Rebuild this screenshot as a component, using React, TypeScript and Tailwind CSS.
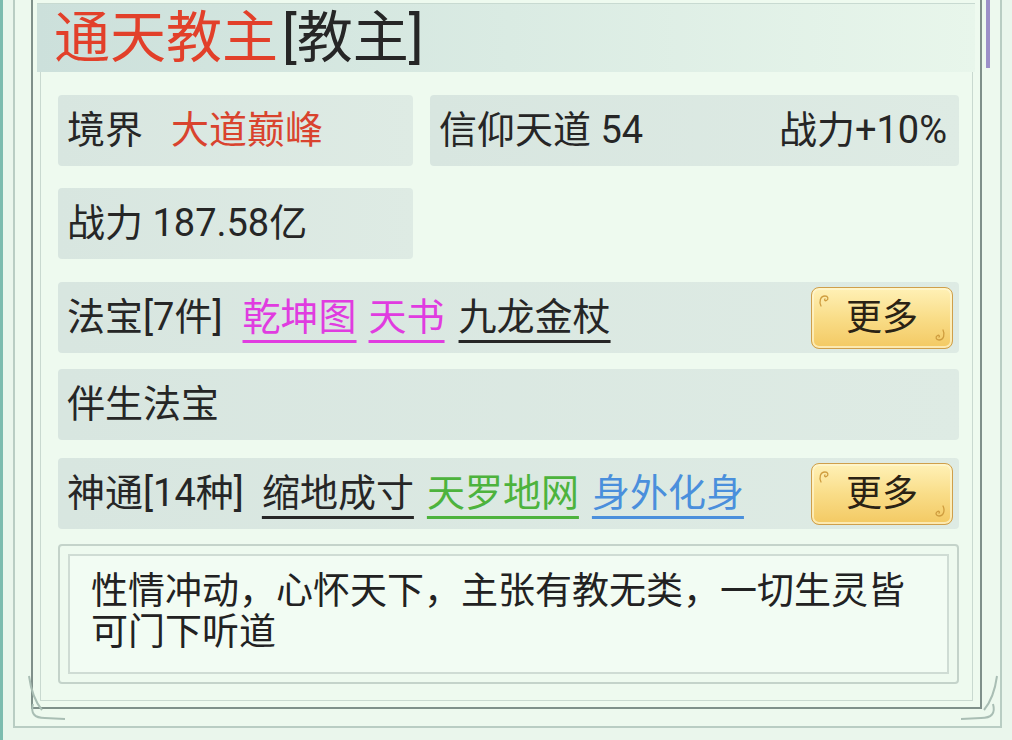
import React from 'react';

const Curl: React.FC<{ className: string }> = ({ className }) => (
  <svg className={className} width="14" height="14" viewBox="0 0 14 14" fill="none">
    <path d="M3 13 C1 9, 2 3, 7 3 C10 3, 11 6, 8.5 7.5 C7 8.3, 6 7, 7 6" stroke="#cf9d3f" strokeWidth="1.3" strokeLinecap="round" />
  </svg>
);

const MoreButton: React.FC = () => (
  <button className="relative w-[142px] h-[62px] mr-[6px] rounded-[8px] border-[1.5px] border-[#cf9f4b] bg-gradient-to-b from-[#fff1b6] via-[#f9dd88] to-[#f3c962] shadow-[inset_0_0_0_2px_rgba(255,247,210,0.7)] text-[36px] leading-[60px] text-[#2a2214]">
    <Curl className="absolute left-[6px] top-[5px]" />
    <Curl className="absolute right-[6px] bottom-[5px] rotate-180" />
    更多
  </button>
);

const Box: React.FC<{ className?: string; children?: React.ReactNode }> = ({ className = '', children }) => (
  <div className={`flex items-center h-[71px] rounded-[4px] bg-gradient-to-r from-[#d8e6e0] to-[#deebe4] pl-[9px] ${className}`}>
    {children}
  </div>
);

export default function App() {
  return (
    <div className="relative w-[1012px] h-[740px] overflow-hidden bg-[#eaf6ec] border-l-[3px] border-[#7dbcaf] pl-[10px] font-[Roboto,'Noto_Sans_CJK_SC',sans-serif] text-[#262626]">
      {/* outer frame */}
      <div className="w-[989px] h-[728px] border-x-2 border-b-2 border-[#b9cdc3] bg-[#edf9ee] pl-[16px] pr-[18px] pb-[17px]">
        {/* panel */}
        <div className="h-full flex flex-col border-x-2 border-b-2 border-[#7f908a] bg-[#eefaef]">
          <div className="mt-[3px] ml-[4px] mr-[5px] border-t border-[#c8dad1] h-[69px] bg-gradient-to-r from-[#cce0db] to-[#e8f6eb] pl-[17px] text-[56px] leading-[68px] whitespace-nowrap">
            <span className="text-[#e2402a]">通天教主</span>
            <span className="ml-[4px] text-[#262626]">[教主]</span>
          </div>

          <div className="flex-1 mx-[7px] mb-[6px] border-x border-b border-[#c9d9d0] pl-[17px] pr-[13px] pt-[23px] text-[38px] flex flex-col">
            <div className="flex gap-[17px]">
              <Box className="w-[355px]">
                <span>境界</span>
                <span className="ml-[28px] text-[#d9432e]">大道巅峰</span>
              </Box>
              <Box className="flex-1 justify-between pr-[12px]">
                <span>信仰天道 54</span>
                <span>战力+10%</span>
              </Box>
            </div>

            <Box className="w-[355px] mt-[22px]">
              <span>战力 187.58亿</span>
            </Box>

            <Box className="mt-[23px] h-[70px] justify-between">
              <div className="whitespace-nowrap">
                <span>法宝[7件]</span>
                <span className="ml-[20px] text-[#e03ce0] underline decoration-[3px] underline-offset-[10px]">乾坤图</span>
                <span className="ml-[12px] text-[#e03ce0] underline decoration-[3px] underline-offset-[10px]">天书</span>
                <span className="ml-[14px] underline decoration-[3px] underline-offset-[10px]">九龙金杖</span>
              </div>
              <MoreButton />
            </Box>

            <Box className="mt-[16px] h-[70px]">
              <span>伴生法宝</span>
            </Box>

            <Box className="mt-[18px] h-[70px] justify-between">
              <div className="whitespace-nowrap">
                <span>神通[14种]</span>
                <span className="ml-[18px] underline decoration-[3px] underline-offset-[10px]">缩地成寸</span>
                <span className="ml-[13px] text-[#4db33d] underline decoration-[3px] underline-offset-[10px]">天罗地网</span>
                <span className="ml-[13px] text-[#4a8fdc] underline decoration-[3px] underline-offset-[10px]">身外化身</span>
              </div>
              <MoreButton />
            </Box>

            <div className="mt-[15px] h-[140px] rounded-[4px] border-2 border-[#c4d3ca] p-[8px]">
              <div className="h-full border-2 border-[#cfdcd4] bg-[#f2fcf3] pl-[21px] pr-[33px] pt-[15px] text-[37px] leading-[41px] text-[#222]">
                性情冲动，心怀天下，主张有教无类，一切生灵皆可门下听道
              </div>
            </div>
          </div>
        </div>
      </div>

      {/* scrollbar thumb */}
      <div className="absolute left-[983px] top-0 w-[4px] h-[68px] bg-[#9c90c8]" />

      {/* corner ornaments */}
      <svg className="absolute left-[20px] top-[672px]" width="50" height="52" viewBox="0 0 50 52" fill="none">
        <path d="M6 4 Q9 26 19 38" stroke="#a9beb4" strokeWidth="2" />
        <path d="M10 32 Q6 46 22 46 L42 47" stroke="#a9beb4" strokeWidth="2" />
      </svg>
      <svg className="absolute left-[950px] top-[672px]" width="50" height="52" viewBox="0 0 50 52" fill="none">
        <path d="M44 4 Q41 26 31 38" stroke="#a9beb4" strokeWidth="2" />
        <path d="M40 32 Q44 46 28 46 L8 47" stroke="#a9beb4" strokeWidth="2" />
      </svg>
    </div>
  );
}
